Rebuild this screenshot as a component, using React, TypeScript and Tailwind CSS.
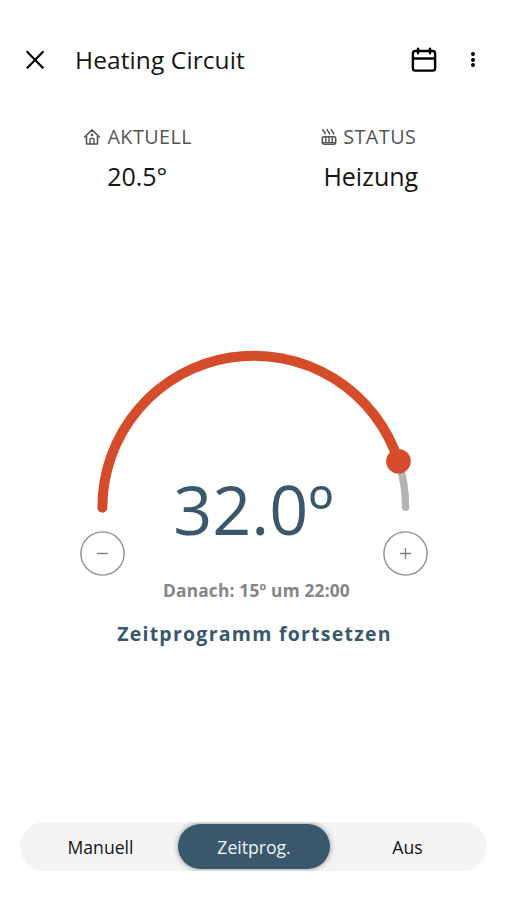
import { useState } from 'react';

type Mode = 'manual' | 'schedule' | 'off';

const MODES: { id: Mode; label: string }[] = [
  { id: 'manual', label: 'Manuell' },
  { id: 'schedule', label: 'Zeitprog.' },
  { id: 'off', label: 'Aus' },
];

const CX = 174;
const CY = 167.3;
const RADIUS = 151.6;

// value from 0 (left end) to 1 (right end) of the half circle
function pointOnArc(value: number) {
  const angle = Math.PI * (1 - value);
  return { x: CX + RADIUS * Math.cos(angle), y: CY - RADIUS * Math.sin(angle) };
}

function CloseIcon() {
  return (
    <svg className="size-5" viewBox="0 0 20 20" fill="none" stroke="currentColor" strokeWidth="2.2" strokeLinecap="round">
      <path d="M2.4 1.9 17.8 17.8M17.8 1.9 2.4 17.8" />
    </svg>
  );
}

function CalendarIcon() {
  return (
    <svg className="h-[26px] w-[26px]" viewBox="0 0 26 26" fill="none" stroke="currentColor" strokeWidth="2.4" strokeLinecap="round">
      <rect x="1.9" y="4" width="22.2" height="19.6" rx="2.4" />
      <path d="M2 11.5h22M7 1.6v4.6M19 1.6v4.6" />
    </svg>
  );
}

function HouseIcon() {
  return (
    <svg className="h-[18px] w-[18px]" viewBox="0 0 18 18" fill="none" stroke="currentColor" strokeWidth="1.6" strokeLinecap="round" strokeLinejoin="round">
      <path d="M1.6 9 9 1.9 16.4 9M3.5 8v8h11V8" />
      <circle cx="9" cy="6.9" r="1.3" fill="currentColor" stroke="none" />
      <path d="M7 16v-3.8a2 2 0 0 1 4 0V16" strokeWidth="1.4" />
    </svg>
  );
}

function HeaterIcon() {
  return (
    <svg className="h-[18px] w-[16px]" viewBox="0 0 16 18" fill="none" stroke="currentColor" strokeWidth="1.5" strokeLinecap="round" strokeLinejoin="round">
      <path d="M2 1.6c.2 2 1.9 1.8 2.3 4.2M6.2 1.6c.2 2 1.9 1.8 2.3 4.2M10.4 1.6c.2 2 1.9 1.8 2.3 4.2" />
      <rect x="1.3" y="8.8" width="13.4" height="7.4" rx="1.6" strokeWidth="1.6" />
      <path d="M4.8 9.4v5.4M8 9.4v5.4M11.2 9.4v5.4M2 14.6h12" strokeWidth="1.4" />
    </svg>
  );
}

function Dial({ value }: { value: number }) {
  const start = pointOnArc(0);
  const end = pointOnArc(1);
  const knob = pointOnArc(value);
  return (
    <svg className="col-start-1 row-start-1 h-[180px] w-[348px]" viewBox="0 0 348 180" fill="none" strokeLinecap="round">
      <path d={`M${knob.x} ${knob.y}A${RADIUS} ${RADIUS} 0 0 1 ${end.x} ${end.y}`} stroke="#b3b3b3" strokeWidth="7.4" />
      <path d={`M${start.x} ${start.y + 0.5}A${RADIUS} ${RADIUS} 0 0 1 ${knob.x} ${knob.y}`} stroke="#d54c2b" strokeWidth="10" />
      <circle cx={knob.x} cy={knob.y} r="12.3" fill="#d54c2b" />
    </svg>
  );
}

function StepButton({ label, path, onClick }: { label: string; path: string; onClick: () => void }) {
  return (
    <button
      aria-label={label}
      onClick={onClick}
      className="text-[#808080]"
    >
      <svg className="size-[45px]" viewBox="0 0 45 45" fill="none" stroke="currentColor" strokeWidth="1.4">
        <circle cx="22.5" cy="22.5" r="21.6" stroke="#8f8f8f" />
        <path d={path} />
      </svg>
    </button>
  );
}

export default function App() {
  const [mode, setMode] = useState<Mode>('schedule');
  const [target, setTarget] = useState(32);

  return (
    <div className="flex h-[900px] w-[507px] flex-col overflow-hidden bg-white font-['Open_Sans',sans-serif] text-[#151515]">
      <header className="flex h-[120px] items-center pl-[25px] pr-[30px]">
        <button aria-label="Close" className="text-black">
          <CloseIcon />
        </button>
        <h1 className="ml-[30px] text-[24.5px] leading-8 tracking-[0.1px]">Heating Circuit</h1>
        <button aria-label="Calendar" className="ml-auto text-black">
          <CalendarIcon />
        </button>
        <button aria-label="More" className="ml-[31px] flex w-[9px] flex-col items-center gap-[1.5px] pb-px">
          <span className="size-1 rounded-full bg-black" />
          <span className="size-1 rounded-full bg-black" />
          <span className="size-1 rounded-full bg-black" />
        </button>
      </header>

      <section className="grid h-[220px] grid-cols-2 content-start px-5 pt-px text-center">
        <div>
          <p className="flex h-8 items-center justify-center gap-[6px] pl-[2px] text-[19.8px] tracking-[0.45px] text-[#555]">
            <HouseIcon />
            AKTUELL
          </p>
          <p className="mt-[7px] pl-px text-[25px] leading-8">20.5°</p>
        </div>
        <div>
          <p className="flex h-8 items-center justify-center gap-[6px] pr-[3px] text-[19.8px] tracking-[0.45px] text-[#555]">
            <HeaterIcon />
            STATUS
          </p>
          <p className="mt-[7px] pl-px text-[25px] leading-8">Heizung</p>
        </div>
      </section>

      <section className="flex flex-col items-center">
        <div className="grid h-[191px] w-[348px]">
          <Dial value={0.9018} />
          <p className="col-start-1 row-start-1 mt-[129px] text-center text-[68.3px] leading-[80px] text-[#3a586b]">
            {target.toFixed(1)}º
          </p>
        </div>
        <div className="flex h-[45px] w-[348px] justify-between">
          <StepButton label="Decrease" path="M17 22.5h11" onClick={() => setTarget(target - 0.5)} />
          <StepButton label="Increase" path="M17 22.5h11M22.5 17v11" onClick={() => setTarget(target + 0.5)} />
        </div>
        <p className="mt-[3px] pl-[6px] text-[17.3px] font-bold leading-6 tracking-[0.2px] text-[#858585]">
          Danach: 15º um 22:00
        </p>
        <button className="mt-[17px] pl-[2px] text-[19.5px] font-bold leading-7 tracking-[1.25px] text-[#3a586b]">
          Zeitprogramm fortsetzen
        </button>
      </section>

      <nav className="mx-auto mt-auto mb-[29px] grid h-[49px] w-[467px] grid-cols-[158px_152px_157px] overflow-hidden rounded-full bg-[#f4f4f4] py-[2px] text-[17.6px]">
        {MODES.map(({ id, label }) => (
          <button
            key={id}
            onClick={() => setMode(id)}
            className={
              mode === id
                ? 'rounded-full bg-[#3a586b] pt-px text-[#eef3f6] shadow-[0_0_5px_1px_rgba(0,0,0,0.3)]'
                : 'rounded-full pt-px first:pl-[3px] last:pr-[2px]'
            }
          >
            {label}
          </button>
        ))}
      </nav>
    </div>
  );
}
